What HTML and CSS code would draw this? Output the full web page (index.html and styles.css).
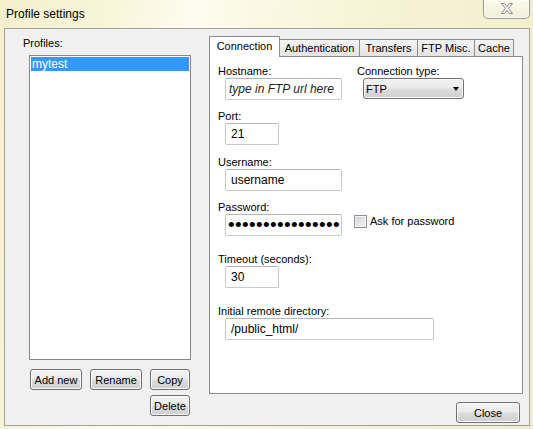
FILE: index.html
```html
<!DOCTYPE html>
<html>
<head>
<meta charset="utf-8">
<title>Profile settings</title>
<link rel="stylesheet" href="styles.css">
</head>
<body>
<div class="window">
  <div class="titlebar">
    <span class="title">Profile settings</span>
    <div class="winclose">
      <svg width="12" height="11" viewBox="0 0 12 11"><path d="M0.5 0.5H3.5L6 3.6L8.5 0.5H11.5L7.6 5.5L11.5 10.5H8.5L6 7.4L3.5 10.5H0.5L4.4 5.5Z" fill="#f5f5f5" stroke="#8c8c8c" stroke-width="1" stroke-linejoin="round"/></svg>
    </div>
  </div>
  <div class="client">
    <div class="left">
      <div class="lbl profiles-lbl">Profiles:</div>
      <div class="listbox">
        <div class="item selected">mytest</div>
      </div>
      <div class="btnrow">
        <button class="btn btn-wide">Add new</button>
        <button class="btn btn-wide">Rename</button>
        <button class="btn btn-small">Copy</button>
      </div>
      <div class="btnrow btnrow-end">
        <button class="btn btn-small">Delete</button>
      </div>
    </div>
    <div class="right">
      <div class="tabs">
        <div class="tab active tab-conn">Connection</div>
        <div class="tab tab-auth">Authentication</div>
        <div class="tab tab-trans">Transfers</div>
        <div class="tab tab-ftp">FTP Misc.</div>
        <div class="tab tab-cache">Cache</div>
      </div>
      <div class="panel">
        <div class="row">
          <div class="field field-host">
            <div class="lbl">Hostname:</div>
            <div class="input input-wide placeholder">type in FTP url here</div>
          </div>
          <div class="field">
            <div class="lbl">Connection type:</div>
            <div class="select">
              <span>FTP</span>
              <span class="arrow"></span>
            </div>
          </div>
        </div>
        <div class="field gap-md">
          <div class="lbl">Port:</div>
          <div class="input input-short">21</div>
        </div>
        <div class="field gap-md1">
          <div class="lbl">Username:</div>
          <div class="input input-wide">username</div>
        </div>
        <div class="field gap-md">
          <div class="lbl">Password:</div>
          <div class="pwrow">
            <div class="input input-wide password">••••••••••••••••</div>
            <div class="checkbox"></div>
            <span class="cblabel">Ask for password</span>
          </div>
        </div>
        <div class="field gap-lg">
          <div class="lbl">Timeout (seconds):</div>
          <div class="input input-short">30</div>
        </div>
        <div class="field gap-lg">
          <div class="lbl">Initial remote directory:</div>
          <div class="input input-long">/public_html/</div>
        </div>
      </div>
      <div class="footer">
        <button class="btn btn-close">Close</button>
      </div>
    </div>
  </div>
</div>
</body>
</html>
```

FILE: styles.css
```css
* {
  box-sizing: border-box;
}

html, body {
  margin: 0;
  padding: 0;
}

body {
  width: 533px;
  height: 429px;
  overflow: hidden;
  font-family: "Liberation Sans", Arial, sans-serif;
  font-size: 11px;
  color: #000;
}

.window {
  width: 533px;
  height: 429px;
  display: flex;
  flex-direction: column;
  padding: 0 3px 3px 4px;
  background: linear-gradient(100deg, #f4f0cd 0%, #f8f5d9 18%, #fdfcef 32%, #faf8e2 45%, #f6f3d4 65%, #f1edc9 100%);
}

.titlebar {
  height: 28px;
  flex: none;
  display: flex;
  align-items: flex-start;
}

.title {
  font-size: 12px;
  line-height: 15px;
  margin: 7px 0 0 2px;
  color: #000;
}

.winclose {
  margin-left: auto;
  width: 47px;
  height: 19px;
  border: 1px solid #9a9a92;
  border-top: none;
  border-radius: 0 0 5px 5px;
  background: linear-gradient(#fbf9ea, #f1eed8);
  box-shadow: inset 0 0 0 1px rgba(255, 255, 255, 0.7);
  display: flex;
  align-items: center;
  justify-content: center;
  padding-bottom: 1px;
}

.client {
  flex: 1;
  border: 1px solid #a3a39c;
  background: #f0f0f0;
  display: grid;
  grid-template-columns: 204px 1fr;
}

.lbl {
  line-height: 13px;
  height: 13px;
  white-space: nowrap;
}

.profiles-lbl {
  margin: 8px 0 0 18px;
}

.listbox {
  margin: 5px 0 0 24px;
  width: 162px;
  height: 305px;
  border: 1px solid #828790;
  background: #fff;
  padding: 1px;
}

.item {
  height: 14px;
  line-height: 14px;
  font-size: 12px;
  padding-left: 1px;
}

.item.selected {
  background: #3399ff;
  color: #fff;
}

.btnrow {
  display: flex;
  gap: 8px;
  margin: 9px 0 0 25px;
  width: 160px;
}

.btnrow-end {
  margin-top: 5px;
  justify-content: flex-end;
}

.btn {
  height: 21px;
  padding: 0;
  font-family: "Liberation Sans", Arial, sans-serif;
  font-size: 11px;
  color: #000;
  border: 1px solid #707070;
  border-radius: 3px;
  background: linear-gradient(#f2f2f2 0%, #ebebeb 48%, #dddddd 52%, #cfcfcf 100%);
  box-shadow: inset 0 0 0 1px #fbfbfb;
}

.btn-wide {
  width: 52px;
}

.btn-small {
  width: 40px;
}

.btn-close {
  width: 64px;
}

.tabs {
  margin-top: 7px;
  height: 20px;
  display: flex;
  align-items: flex-end;
}

.tab {
  height: 17px;
  border: 1px solid #898c95;
  border-bottom: none;
  margin-left: -1px;
  background: linear-gradient(#f3f3f3, #e4e4e4);
  text-align: center;
  line-height: 13px;
  padding-top: 2px;
  white-space: nowrap;
}

.tab.active {
  height: 21px;
  margin-left: 0;
  margin-bottom: -1px;
  background: #fff;
  position: relative;
  z-index: 1;
  padding-top: 3px;
}

.tab-conn { width: 71px; }
.tab-auth { width: 81px; }
.tab-trans { width: 59px; }
.tab-ftp { width: 58px; }
.tab-cache { width: 40px; }

.panel {
  width: 314px;
  height: 338px;
  border: 1px solid #898c95;
  background: #fff;
  padding: 8px 0 0 8px;
  display: flex;
  flex-direction: column;
}

.row {
  display: flex;
}

.field-host {
  width: 139px;
}

.gap-md { margin-top: 10px; }
.gap-md1 { margin-top: 11px; }
.gap-lg { margin-top: 17px; }

.input {
  margin-left: 7px;
  height: 22px;
  border: 1px solid #c6cad0;
  border-top-color: #b3b7bd;
  border-radius: 2px;
  background: #fff;
  font-size: 12px;
  line-height: 20px;
  padding-left: 5px;
  white-space: nowrap;
  overflow: hidden;
}

.input-wide { width: 117px; }
.input-short { width: 54px; }
.input-long { width: 209px; }

.placeholder {
  font-style: italic;
  padding-left: 3px;
  color: #1e1e1e;
}

.password {
  padding-left: 2px;
  font-size: 19px;
  letter-spacing: 0.35px;
  line-height: 20px;
}

.pwrow {
  display: flex;
  align-items: flex-start;
}

.checkbox {
  width: 13px;
  height: 13px;
  margin: 1px 0 0 12px;
  border: 1px solid #8e8f8f;
  background: linear-gradient(135deg, #cdd0d5, #f7f7f7);
  box-shadow: inset 0 0 0 1px #f4f4f4;
}

.cblabel {
  margin: 1px 0 0 3px;
  line-height: 13px;
}

.select {
  margin-left: 6px;
  width: 101px;
  height: 21px;
  border: 1px solid #707070;
  border-radius: 3px;
  background: linear-gradient(#f2f2f2 0%, #ebebeb 48%, #dddddd 52%, #cfcfcf 100%);
  box-shadow: inset 0 0 0 1px #fbfbfb;
  display: flex;
  align-items: center;
  padding: 0 4px 0 2px;
}

.arrow {
  margin-left: auto;
  width: 0;
  height: 0;
  border-left: 3.5px solid transparent;
  border-right: 3.5px solid transparent;
  border-top: 4px solid #000;
}

.footer {
  margin: 8px 0 0 247px;
}
```
